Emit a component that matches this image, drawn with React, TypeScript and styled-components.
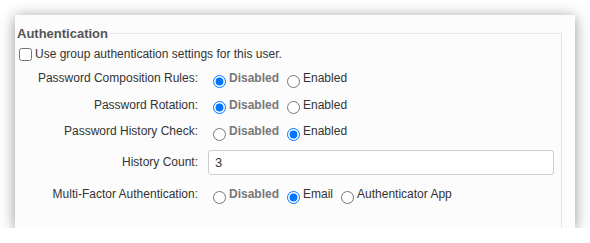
import styled, { createGlobalStyle } from "styled-components";

const GlobalStyle = createGlobalStyle`
  html, body {
    margin: 0;
    background: #ffffff;
  }
  body {
    font-family: "Liberation Sans", Arial, sans-serif;
    font-size: 12px;
    color: #333;
  }
`;

const Card = styled.div`
  margin: 15px 0 0 15px;
  width: 560px;
  height: 213px;
  box-sizing: border-box;
  padding-top: 11px;
  background: #fcfcfc;
  box-shadow: 0 2px 14px rgba(0, 0, 0, 0.42);
  overflow: hidden;
`;

const FieldSet = styled.fieldset`
  margin: 0 13px 0 0;
  padding: 0;
  min-width: 0;
  height: 240px;
  border: 1px solid #e6e6e6;
  border-left: none;
  border-bottom: none;
`;

const Legend = styled.legend`
  padding: 0 2px;
  font-size: 13px;
  font-weight: bold;
  color: #555;
`;

const CheckRow = styled.label`
  display: flex;
  align-items: center;
  height: 20px;
  margin-top: 3px;
  font-size: 12px;
  color: #333;
  input {
    margin: 1px 3px 0 4px;
    width: 13px;
    height: 13px;
  }
`;

const Form = styled.div`
  display: grid;
  grid-template-columns: 183px 1fr;
  column-gap: 10px;
  margin-top: 1px;
`;

const Label = styled.div<{ $h: number }>`
  height: ${(p) => p.$h}px;
  display: flex;
  align-items: center;
  justify-content: flex-end;
  color: #333;
`;

const Options = styled.div<{ $h: number }>`
  height: ${(p) => p.$h}px;
  display: flex;
  align-items: center;
`;

const Option = styled.label<{ $muted?: boolean }>`
  display: flex;
  align-items: center;
  margin-right: 3px;
  color: ${(p) => (p.$muted ? "#777" : "#333")};
  font-weight: ${(p) => (p.$muted ? "bold" : "normal")};
  input {
    margin: 6px 3px 0 5px;
    width: 13px;
    height: 13px;
    accent-color: #0075ff;
  }
`;

const TextInput = styled.input`
  box-sizing: border-box;
  width: 346px;
  height: 25px;
  padding: 0 6px;
  border: 1px solid #ccc;
  border-radius: 3px;
  background: #fff;
  font-family: "Liberation Sans", Arial, sans-serif;
  font-size: 13px;
  color: #333;
  outline: none;
`;

type Choice = { label: string; muted?: boolean };

const rows: { label: string; name: string; choices: Choice[]; checked: number }[] = [
  {
    label: "Password Composition Rules:",
    name: "composition",
    choices: [{ label: "Disabled", muted: true }, { label: "Enabled" }],
    checked: 0,
  },
  {
    label: "Password Rotation:",
    name: "rotation",
    choices: [{ label: "Disabled", muted: true }, { label: "Enabled" }],
    checked: 0,
  },
  {
    label: "Password History Check:",
    name: "history",
    choices: [{ label: "Disabled", muted: true }, { label: "Enabled" }],
    checked: 1,
  },
];

const RadioGroup = ({ name, choices, checked }: { name: string; choices: Choice[]; checked: number }) => (
  <>
    {choices.map((c, i) => (
      <Option key={c.label} $muted={c.muted}>
        <input type="radio" name={name} defaultChecked={i === checked} />
        {c.label}
      </Option>
    ))}
  </>
);

export default function App() {
  return (
    <>
      <GlobalStyle />
      <Card>
        <FieldSet>
          <Legend>Authentication</Legend>
          <CheckRow>
            <input type="checkbox" />
            Use group authentication settings for this user.
          </CheckRow>
          <Form>
            {rows.map((r) => (
              <>
                <Label key={r.name + "-l"} $h={26.5}>
                  {r.label}
                </Label>
                <Options key={r.name + "-o"} $h={26.5}>
                  <RadioGroup name={r.name} choices={r.choices} checked={r.checked} />
                </Options>
              </>
            ))}
            <Label $h={35}>History Count:</Label>
            <Options $h={35}>
              <TextInput defaultValue="3" />
            </Options>
            <Label $h={29}>Multi-Factor Authentication:</Label>
            <Options $h={29}>
              <RadioGroup
                name="mfa"
                choices={[{ label: "Disabled", muted: true }, { label: "Email" }, { label: "Authenticator App" }]}
                checked={1}
              />
            </Options>
          </Form>
        </FieldSet>
      </Card>
    </>
  );
}
